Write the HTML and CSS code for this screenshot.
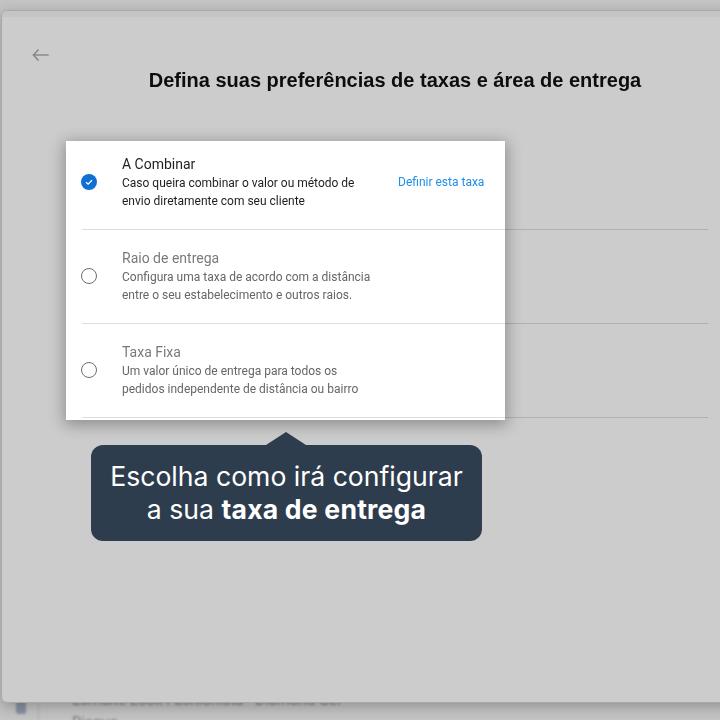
FILE: index.html
```html
<!DOCTYPE html>
<html lang="pt-BR">
  <head>
    <meta charset="utf-8">
    <link rel="stylesheet" href="styles.css">
  </head>
  <body>
    <div class="page">
      <div class="product">
        <span class="product-thumb"></span>
        <span class="product-sep"></span>
        <p class="product-name">Esmalte Look Fashionista - Diamond Gel<br>Risque</p>
      </div>
    </div>

    <div class="modal">
      <div class="modal-strip"></div>
      <div class="modal-head">
        <button class="back" aria-label="Voltar">
          <svg width="18" height="18" viewBox="0 0 18 18" fill="none" stroke="currentColor" stroke-width="1.4" stroke-linecap="square">
            <line x1="2.5" y1="9" x2="17" y2="9" />
            <polyline points="7,4 2.5,9 7,14" />
          </svg>
        </button>
        <h1 class="modal-title">Defina suas preferências de taxas e área de entrega</h1>
      </div>

      <div class="fees-wrap">
        <ul class="fees">
          <li class="fee selected">
            <span class="radio checked">
              <svg width="16" height="16" viewBox="0 0 16 16" fill="none">
                <circle cx="8" cy="8" r="8" fill="#0f6fd2" />
                <polyline points="5,8.3 7.1,10.2 11,6.2" stroke="#fff" stroke-width="1.3" fill="none" />
              </svg>
            </span>
            <div class="fee-text">
              <div class="fee-name">A Combinar</div>
              <div class="fee-desc">Caso queira combinar o valor ou método de<br>envio diretamente com seu cliente</div>
            </div>
            <a class="fee-link" href="#">Definir esta taxa</a>
          </li>
          <li class="fee">
            <span class="radio"></span>
            <div class="fee-text">
              <div class="fee-name">Raio de entrega</div>
              <div class="fee-desc">Configura uma taxa de acordo com a distância<br>entre o seu estabelecimento e outros raios.</div>
            </div>
          </li>
          <li class="fee">
            <span class="radio"></span>
            <div class="fee-text">
              <div class="fee-name">Taxa Fixa</div>
              <div class="fee-desc">Um valor único de entrega para todos os<br>pedidos independente de distância ou bairro</div>
            </div>
          </li>
        </ul>

        <div class="spotlight"></div>
        <div class="tip">
          Escolha como irá configurar<br>a sua <strong>taxa de entrega</strong>
        </div>
      </div>
    </div>
  </body>
</html>
```

FILE: styles.css
```css
html,
body {
  margin: 0;
  height: 720px;
  overflow: hidden;
}

body {
  background-color: #f4f4f4;
  font-family: Roboto, "Noto Sans", sans-serif;
}

/* page behind the modal */
.page {
  padding: 689px 0 0 16px;
  filter: blur(0.8px);
}

.product {
  display: flex;
  align-items: flex-start;
}

.product-thumb {
  width: 10px;
  height: 18px;
  margin-top: 7px;
  border-radius: 2px;
  background-color: #a9b6c8;
}

.product-sep {
  width: 1px;
  height: 40px;
  margin: 0 33px 0 12px;
  background-color: #dcdcdc;
}

.product-name {
  margin: 0;
  font-size: 15px;
  line-height: 22px;
  color: #9a9a9a;
}

/* modal */
.modal {
  position: fixed;
  left: 1px;
  top: 10px;
  width: 786px;
  height: 691px;
  background-color: #ffffff;
  border: 1px solid #d2d2d2;
  border-radius: 6px;
  box-shadow: 0 4px 14px rgba(0, 0, 0, 0.25);
}

.modal-strip {
  height: 6px;
  background-color: #f7f7f7;
  border-radius: 6px 6px 0 0;
}

.modal-head {
  padding: 29px 29px 0;
}

.back {
  display: block;
  padding: 0;
  border: none;
  background: none;
  color: #a6a6a6;
  cursor: pointer;
}

.back svg {
  display: block;
}

.modal-title {
  margin: 3px 51px 0;
  text-align: center;
  font-family: "Liberation Sans", Arial, sans-serif;
  font-size: 20px;
  line-height: 26px;
  font-weight: 700;
  color: #111;
}

.fees-wrap {
  position: relative;
  margin: 43px 80px 0;
}

.fees {
  list-style: none;
  margin: 0;
  padding: 0;
}

.fee {
  display: grid;
  grid-template-columns: 40px 260px auto;
  align-items: center;
  box-sizing: border-box;
  height: 94px;
  padding-bottom: 1px;
  border-bottom: 1px solid #dedede;
}

.radio {
  box-sizing: border-box;
  width: 16px;
  height: 16px;
  margin-left: -1px;
  border: 1.5px solid #6d6d6d;
  border-radius: 50%;
}

.radio.checked {
  border: none;
}

.radio svg {
  display: block;
}

.fee-name {
  font-size: 14px;
  line-height: 20px;
  color: #7a7a7a;
}

.fee-desc {
  font-size: 12px;
  line-height: 18px;
  color: #666;
}

.selected .fee-name,
.selected .fee-desc {
  color: #1e1e1e;
}

.fee-link {
  margin-left: 16px;
  font-size: 12px;
  color: #1f8eea;
  text-decoration: none;
}

/* guided tour overlay */
.spotlight {
  position: absolute;
  left: -16px;
  top: 5px;
  width: 439px;
  height: 279px;
  pointer-events: none;
  box-shadow: 0 0 0 2000px rgba(0, 0, 0, 0.2), 0 3px 14px 2px rgba(0, 0, 0, 0.3);
}

.tip {
  position: absolute;
  left: 9px;
  top: 309px;
  width: 391px;
  box-sizing: border-box;
  padding: 15px 6px;
  background-color: #2e3d4e;
  border-radius: 12px;
  color: #fff;
  text-align: center;
  font-family: Inter, "Noto Sans", sans-serif;
  font-size: 26.6px;
  line-height: 33px;
}

.tip strong {
  font-weight: 700;
  letter-spacing: 0.2px;
}

.tip::before {
  content: "";
  position: absolute;
  left: 175px;
  top: -13px;
  border-left: 20px solid transparent;
  border-right: 20px solid transparent;
  border-bottom: 13px solid #2e3d4e;
}
```
